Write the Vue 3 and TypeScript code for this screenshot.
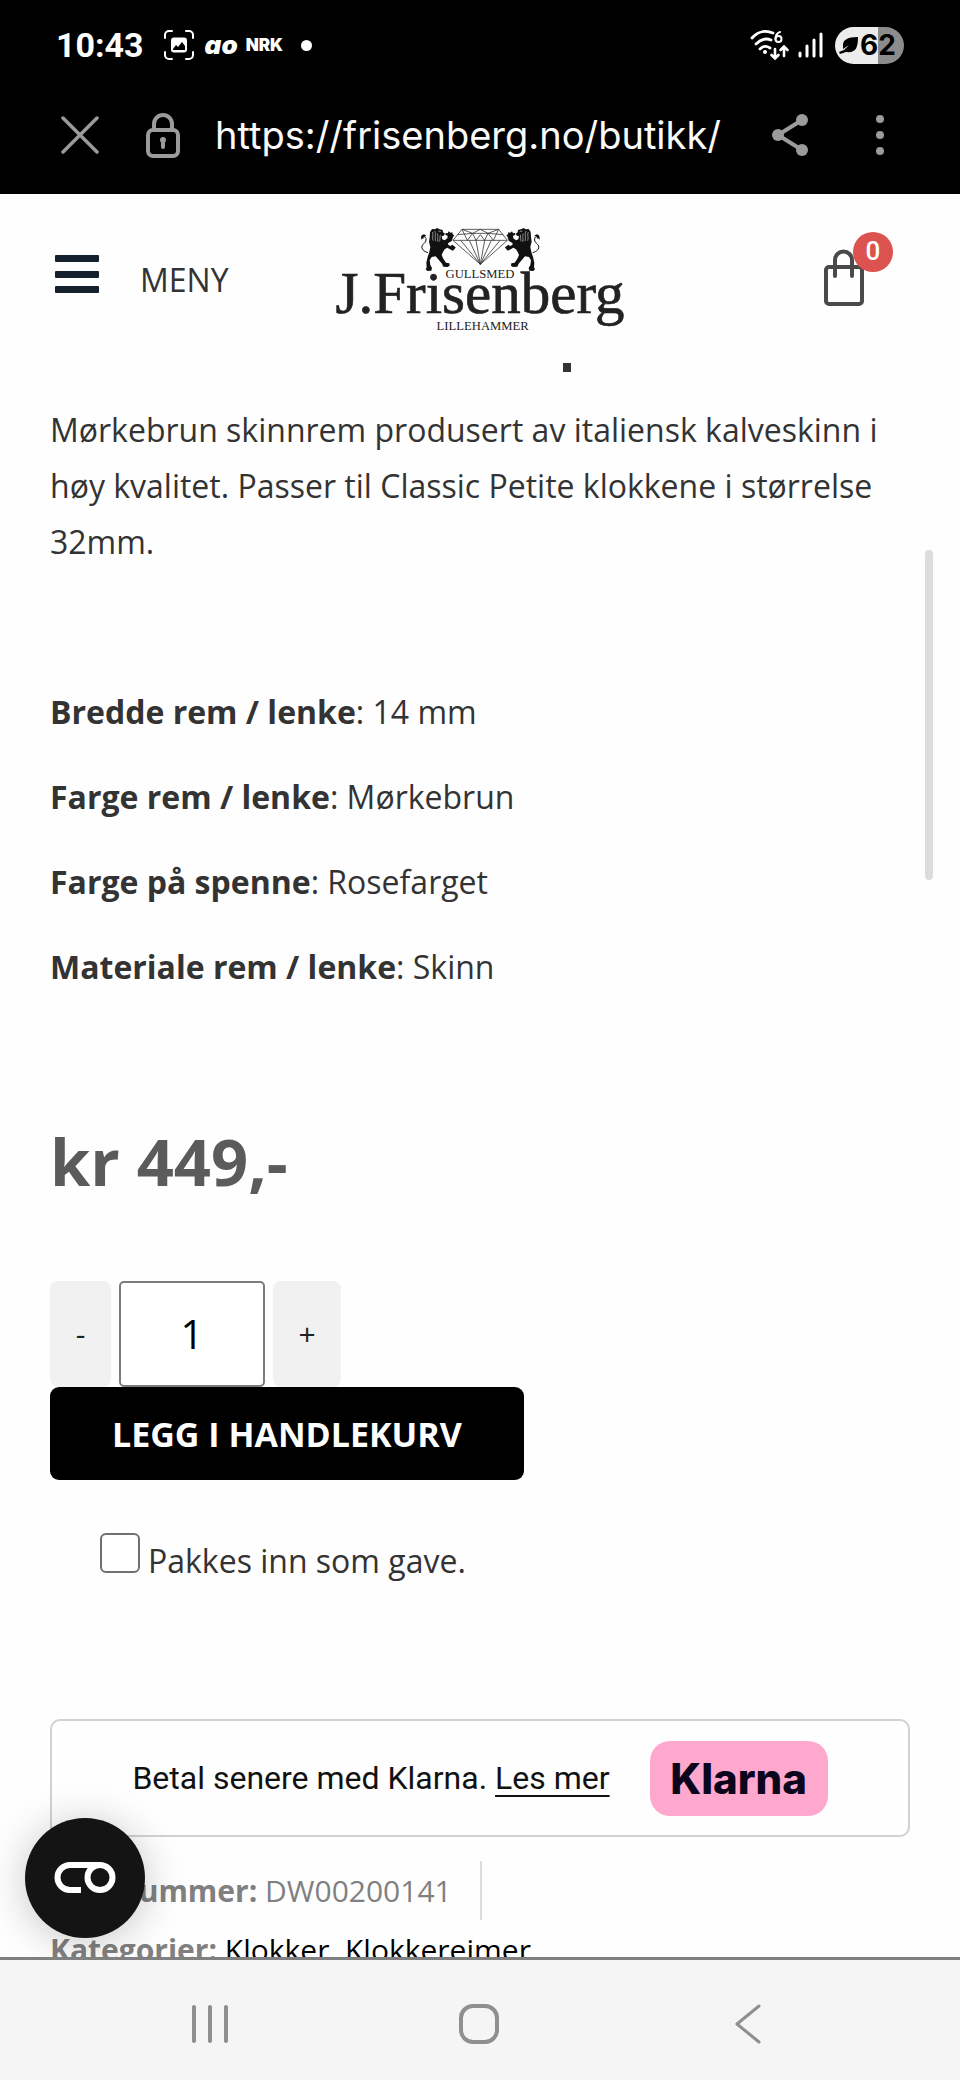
<script setup lang="ts">
import { ref } from 'vue'

interface Spec {
  label: string
  value: string
}

const specs: Spec[] = [
  { label: 'Bredde rem / lenke', value: '14 mm' },
  { label: 'Farge rem / lenke', value: 'Mørkebrun' },
  { label: 'Farge på spenne', value: 'Rosefarget' },
  { label: 'Materiale rem / lenke', value: 'Skinn' },
]

const quantity = ref<number>(1)
const giftWrap = ref<boolean>(false)
const cartCount = ref<number>(0)

function decrease(): void {
  quantity.value = Math.max(1, quantity.value - 1)
}
function increase(): void {
  quantity.value += 1
}
function addToCart(): void {
  cartCount.value += quantity.value
}
</script>

<template>
  <div class="phone">
    <div class="status">
      <span class="clock">10:43</span>
      <svg class="shot" width="30" height="30" viewBox="0 0 30 30" fill="none" stroke="#fff" stroke-width="2" stroke-linecap="round">
        <path d="M1 8V5a4 4 0 0 1 4-4h3M22 1h3a4 4 0 0 1 4 4v3M29 22v3a4 4 0 0 1-4 4h-3M8 29H5a4 4 0 0 1-4-4v-3" />
        <path d="M10 7.500h10a3 3 0 0 1 3 3v9a3 3 0 0 1-3 3H10a3 3 0 0 1-3-3v-9a3 3 0 0 1 3-3z" fill="#fff" stroke="none" />
        <path d="M9 19l3-4 2 2 4-5 3 4v4H9z" fill="#000" stroke="none" />
      </svg>
      <span class="ao">ao</span>
      <span class="nrk">NRK</span>
      <span class="dot"></span>
      <svg class="wifi" width="40" height="32" viewBox="0 0 40 32" fill="none" stroke="#fff" stroke-width="2.800" stroke-linecap="round">
        <path d="M2 9C8 2 16 1 23 4M6 15c5-5 10-6 15-4M10 20c3-3 7-3 10-1" />
        <circle cx="15" cy="23" r="2" fill="#fff" stroke="none" />
        <path d="M30 3c-3 1-4.500 4-4.500 7" stroke-width="2" />
        <circle cx="28.500" cy="10" r="3" stroke-width="2" />
        <path d="M25 20v9M21.500 26l3.500 3.500 3.500-3.500M34 27v-9M30.500 21l3.500-3.500 3.500 3.500" stroke-width="2.600" />
      </svg>
      <svg class="signal" width="25" height="28" viewBox="0 0 25 28" stroke="#fff" stroke-width="3" stroke-linecap="round">
        <path d="M2 22v3M9 15v10M16 9v16M23 3v22" />
      </svg>
      <svg width="69" height="37" viewBox="0 0 69 37" role="img" aria-label="Batteri 62">
        <path d="M18.500 0H43v37H18.500a18.500 18.500 0 0 1 0-37z" fill="#ececec" />
        <path d="M43 0h7.500a18.500 18.500 0 0 1 0 37H43z" fill="#8c8c8c" />
        <path d="M8 20c-1-7 4-10 15-10 0 12-3 16-12 15l-6 2-1-2 5-2 5-5-6 4z" fill="#000" />
        <text x="25" y="28" class="battery-text">62</text>
      </svg>
    </div>

    <div class="browser">
      <button class="plain close" aria-label="Lukk">
        <svg width="38" height="38" viewBox="0 0 38 38" stroke="#9b9b9b" stroke-width="3.500" stroke-linecap="round">
          <path d="M2 2l34 34M36 2L2 36" />
        </svg>
      </button>
      <svg class="lock" width="34" height="46" viewBox="0 0 34 46" fill="none" stroke="#9b9b9b" stroke-width="4">
        <rect x="2" y="18" width="30" height="26" rx="5" />
        <path d="M8 18v-6a9 9 0 0 1 18 0v6" />
        <circle cx="17" cy="28" r="3" fill="#9b9b9b" stroke="none" />
        <path d="M17 28v7" stroke-linecap="round" />
      </svg>
      <span class="url">https://frisenberg.no/butikk/</span>
      <button class="plain" aria-label="Del">
        <svg width="38" height="42" viewBox="0 0 38 42" fill="#9b9b9b">
          <path d="M31 6L7 21l24 15" fill="none" stroke="#9b9b9b" stroke-width="4" />
          <circle cx="31" cy="6" r="6" /><circle cx="7" cy="21" r="6" /><circle cx="31" cy="36" r="6" />
        </svg>
      </button>
      <button class="plain more" aria-label="Mer">
        <svg width="8" height="40" viewBox="0 0 8 40" fill="#9b9b9b">
          <circle cx="4" cy="4" r="4" /><circle cx="4" cy="20" r="4" /><circle cx="4" cy="36" r="4" />
        </svg>
      </button>
    </div>

    <div class="viewport">
      <header class="header">
        <button class="plain menu">
          <svg width="44" height="45" viewBox="0 0 44 45" fill="#14202b">
            <rect width="44" height="7" rx="1" /><rect y="16" width="44" height="7" rx="1" /><rect y="31" width="44" height="7" rx="1" />
          </svg>
          <span>MENY</span>
        </button>

        <a href="#" class="logo" aria-label="Gullsmed J.Frisenberg Lillehammer">
          <svg width="292" height="107" viewBox="42 78 876 321">
            <defs>
              <g id="lion">
                <path d="M42 92C28 88 22 80 24 72c3-8 14-10 12-22-2-9-14-8-14 2" fill="none" stroke="#111" stroke-width="3" />
                <path d="M22 42c4-6 12-6 15 1-6-1-9 2-9 7-5 1-8-3-6-8z" />
                <path d="M48 30l6-9 9 1 6-4 8 4 9 2 1 7 6 4-4 6-6 2 2 9 7 3 8-6 1-8-7-2 1-6 6 1 3-6 5 4 6-1 1 6 5 3-4 5-3 11-12 8 1 5 7 3 5-4 5 4 5 4-3 5-6 5-8-4-8-5-8 5-5 8-4 9 5 11 8 12 10 2 1 7-6 4-13-1-4-9-12-14-7-8-12 2-6 10 2 14 5 9-2 8-12 1-5-5 3-6-1-14 4-17 5-15 3-15-4-16 2-14z" />
                <path d="M55 30c5 8-2 16 2 26M62 27c5 9-1 19 3 30M70 34c4 9-1 16 2 26M79 38l-2 20M73 27l8 2" fill="none" stroke="#fff" stroke-width="1.500" />
              </g>
            </defs>
            <g transform="translate(282 66)" fill="#111">
              <use href="#lion" />
              <use href="#lion" transform="translate(398 0) scale(-1 1)" />
              <path d="M117 55L144 22H254L280 55L199 127ZM117 55H280M144 22L160 55L176 34L199 22L222 34L238 55L254 22M130 38L176 34H222L267 38M144 22L176 34M254 22L222 34M176 34L186 55L199 38L212 55L222 34M140 55L199 127L166 55M199 127L186 55M199 127L212 55M199 127L232 55M199 127L258 55" fill="none" stroke="#333" stroke-width="2.400" />
            </g>
            <text x="480" y="235" text-anchor="middle" class="logo-small">GULLSMED</text>
            <text x="480" y="340" text-anchor="middle" class="logo-name">J.Frisenberg</text>
            <text x="488" y="391" text-anchor="middle" class="logo-small">LILLEHAMMER</text>
          </svg>
        </a>

        <a href="#" class="cart" aria-label="Handlekurv">
          <svg width="42" height="60" viewBox="0 0 42 60" fill="none" stroke="#4a4a4a" stroke-width="4" stroke-linecap="round">
            <rect x="3" y="19" width="36" height="37" rx="3" />
            <path d="M12 28V12a8 8 0 0 1 17 0v16" />
          </svg>
          <span class="badge">{{ cartCount }}</span>
        </a>
      </header>

      <main class="content">
        <div class="title-tail"></div>
        <p class="intro">
          Mørkebrun skinnrem produsert av italiensk kalveskinn i høy kvalitet. Passer til Classic Petite klokkene i størrelse 32mm.
        </p>

        <div class="specs">
          <p v-for="s in specs" :key="s.label"><strong>{{ s.label }}</strong>: {{ s.value }}</p>
        </div>

        <p class="price">kr 449,-</p>

        <div class="quantity">
          <button class="step minus" aria-label="Færre" @click="decrease">-</button>
          <input v-model.number="quantity" class="amount" type="text" inputmode="numeric" aria-label="Antall" />
          <button class="step plus" aria-label="Flere" @click="increase">+</button>
        </div>
        <button class="add" @click="addToCart">LEGG I HANDLEKURV</button>

        <label class="gift">
          <input v-model="giftWrap" type="checkbox" />
          <span>Pakkes inn som gave.</span>
        </label>

        <section class="klarna">
          <span>Betal senere med Klarna. <a href="#">Les mer</a></span>
          <span class="klarna-badge">Klarna</span>
        </section>

        <div class="meta">
          <p class="sku"><strong>Varenummer:</strong> DW00200141</p>
          <p><strong>Kategorier:</strong> <a href="#">Klokker</a><span class="comma">, </span><a href="#">Klokkereimer</a></p>
        </div>
      </main>

      <div class="thumb"></div>
      <button class="consent" aria-label="Informasjonskapsler">
        <svg width="62" height="32" viewBox="0 0 62 32" fill="none" stroke="#fff" stroke-width="6">
          <path d="M27 28H16a12.500 12.500 0 0 1 0-25H46" />
          <circle cx="46" cy="15.500" r="12.500" />
        </svg>
      </button>
    </div>

    <nav class="system">
      <button class="plain" aria-label="Siste apper">
        <svg width="36" height="40" viewBox="0 0 36 40" stroke="#8f8f8f" stroke-width="4" stroke-linecap="round">
          <path d="M2 3v34M18 3v34M34 3v34" />
        </svg>
      </button>
      <button class="plain" aria-label="Hjem">
        <svg width="42" height="42" viewBox="0 0 42 42" fill="none" stroke="#8f8f8f" stroke-width="4">
          <rect x="3" y="3" width="36" height="36" rx="12" />
        </svg>
      </button>
      <button class="plain" aria-label="Tilbake">
        <svg width="26" height="42" viewBox="0 0 26 42" fill="none" stroke="#8f8f8f" stroke-width="3" stroke-linecap="round" stroke-linejoin="round">
          <path d="M24 3L2 21l22 18" />
        </svg>
      </button>
    </nav>
  </div>
</template>

<style>
body {
  margin: 0;
  background: #fff;
}
</style>

<style scoped>
.phone {
  display: flex;
  flex-direction: column;
  height: 100vh;
  background: #fefefe;
  color: #333;
  font-family: "Open Sans", "Noto Sans", sans-serif;
  font-size: 32px;
  line-height: 56px;
}
svg {
  display: block;
  flex: none;
}
p {
  margin: 0;
}
button {
  font: inherit;
  cursor: pointer;
}
.plain {
  display: flex;
  padding: 0;
  border: 0;
  background: none;
  color: inherit;
}

.status {
  display: flex;
  flex: none;
  align-items: center;
  height: 90px;
  padding: 0 56px;
  background: #000;
  color: #fff;
}
.clock {
  font: 700 34px/40px Roboto, sans-serif;
}
.shot {
  margin-left: 20px;
}
.ao {
  margin-left: 11px;
  font: italic 900 26px/32px Inter, sans-serif;
}
.nrk {
  margin-left: 8px;
  font: 900 17px/24px Inter, sans-serif;
}
.dot {
  width: 11px;
  height: 11px;
  margin-left: 18px;
  border-radius: 50%;
  background: #fff;
}
.wifi {
  margin-left: auto;
}
.signal {
  margin: 0 12px 0 8px;
}
.battery-text {
  fill: #000;
  font: 700 28px Inter, sans-serif;
}

.browser {
  display: flex;
  flex: none;
  align-items: center;
  box-sizing: border-box;
  height: 104px;
  padding: 0 76px 14px 61px;
  background: #000;
  color: #fafafa;
}
.lock {
  margin-left: 47px;
}
.url {
  flex: 1;
  margin-left: 35px;
  font: 400 38px/48px Inter, sans-serif;
  white-space: nowrap;
}
.more {
  margin-left: 67px;
}

.viewport {
  position: relative;
  flex: 1;
  min-height: 0;
  overflow: hidden;
}
.header {
  display: grid;
  grid-template-columns: 1fr auto 1fr;
  align-items: start;
  box-sizing: border-box;
  height: 158px;
  padding: 32px 55px 0;
  background: #fefefe;
}
.menu {
  align-items: flex-end;
  gap: 41px;
  margin-top: 29px;
  line-height: 40px;
}
.logo-small {
  fill: #222;
  font: 38px "Liberation Serif", serif;
}
.logo-name {
  fill: #222;
  stroke: #222;
  stroke-width: 2px;
  font: 177px "Liberation Serif", serif;
}
.cart {
  position: relative;
  display: flex;
  align-items: flex-end;
  justify-self: end;
  width: 70px;
  height: 76px;
  margin: 6px 12px 0 0;
  text-decoration: none;
}
.badge {
  position: absolute;
  top: 0;
  right: 0;
  width: 40px;
  height: 40px;
  border-radius: 50%;
  background: #dc524e;
  color: #fff;
  font: 500 26px/38px Roboto, sans-serif;
  text-align: center;
}

.content {
  padding: 0 50px;
}
.title-tail {
  width: 8px;
  height: 9px;
  margin: 11px 0 30px 513px;
  background: #333;
}
.specs {
  display: grid;
  gap: 29px;
  margin-top: 114px;
}
.price {
  margin-top: 126px;
  color: #5b5b5b;
  font-size: 65px;
  font-weight: 700;
  line-height: 80px;
}
.quantity {
  display: flex;
  gap: 8px;
  height: 106px;
  margin-top: 80px;
}
.step {
  padding: 0;
  border: 0;
  border-radius: 8px;
  background: #f1f1f1;
  color: #222;
  font-size: 30px;
}
.minus {
  width: 61px;
}
.plus {
  width: 68px;
}
.amount {
  box-sizing: border-box;
  width: 146px;
  padding: 0;
  border: 2px solid #7c7c7c;
  border-radius: 5px;
  background: #fff;
  color: #000;
  font: 400 40px/56px "Open Sans", sans-serif;
  text-align: center;
}
.add {
  display: block;
  height: 93px;
  padding: 0 62px;
  border: 0;
  border-radius: 9px;
  background: #000;
  color: #fff;
  font-size: 34px;
  font-weight: 700;
}
.gift {
  display: flex;
  align-items: baseline;
  gap: 8px;
  margin: 53px 0 0 50px;
  line-height: 40px;
}
.gift input {
  box-sizing: border-box;
  width: 40px;
  height: 40px;
  margin: 0;
  border: 2px solid #707070;
  border-radius: 6px;
  background: #fff;
  appearance: none;
}
.gift input:checked {
  background: #333;
}
.klarna {
  display: flex;
  align-items: center;
  justify-content: center;
  gap: 40px;
  box-sizing: border-box;
  height: 118px;
  margin-top: 138px;
  border: 2px solid #d2d2d2;
  border-radius: 10px;
  color: #111;
  font-family: Roboto, sans-serif;
}
.klarna a {
  color: inherit;
  text-decoration: underline;
  text-decoration-thickness: 2px;
  text-underline-offset: 6px;
  text-decoration-skip-ink: none;
}
.klarna-badge {
  width: 178px;
  border-radius: 20px;
  background: #ffa8cd;
  color: #0b051d;
  font: 800 42px/75px Inter, sans-serif;
  text-align: center;
}
.meta {
  margin-top: 24px;
  color: #808080;
  font-size: 30px;
  line-height: 59px;
  white-space: nowrap;
}
.meta a,
.comma {
  color: #000;
  text-decoration: none;
}
.sku {
  width: fit-content;
  padding-right: 28px;
  border-right: 2px solid #ddd;
}

.thumb {
  position: absolute;
  top: 356px;
  right: 27px;
  width: 8px;
  height: 330px;
  border-radius: 4px;
  background: #dcdcdc;
}
.consent {
  position: absolute;
  bottom: 19px;
  left: 25px;
  display: flex;
  align-items: center;
  justify-content: center;
  width: 120px;
  height: 120px;
  padding: 0;
  border: 0;
  border-radius: 50%;
  background: #141414;
  box-shadow: 0 4px 40px rgba(0, 0, 0, 0.22);
}

.system {
  display: grid;
  flex: none;
  grid-template-columns: repeat(3, 1fr);
  align-items: center;
  justify-items: center;
  box-sizing: border-box;
  height: 123px;
  padding: 8px 78px 0 75px;
  border-top: 3px solid #808080;
  background: #f5f5f5;
}
</style>
